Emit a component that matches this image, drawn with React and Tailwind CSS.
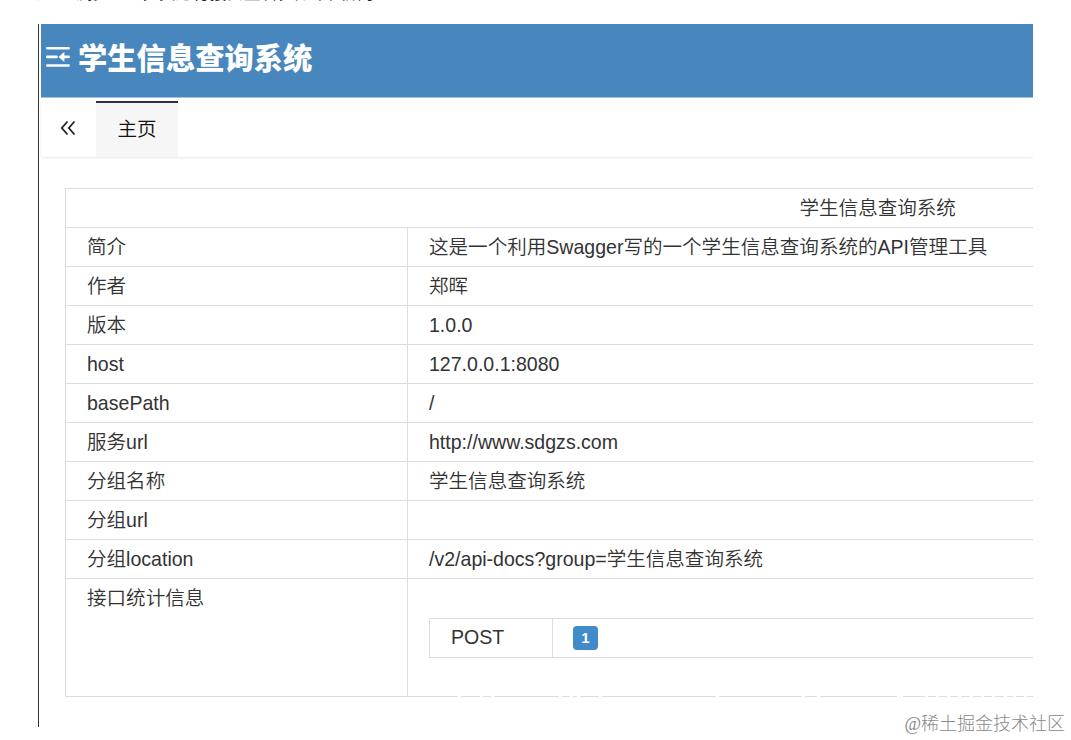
import React from "react";

const rows = [
  { label: "简介", value: "这是一个利用Swagger写的一个学生信息查询系统的API管理工具" },
  { label: "作者", value: "郑晖" },
  { label: "版本", value: "1.0.0" },
  { label: "host", value: "127.0.0.1:8080" },
  { label: "basePath", value: "/" },
  { label: "服务url", value: "http://www.sdgzs.com" },
  { label: "分组名称", value: "学生信息查询系统" },
  { label: "分组url", value: "" },
  { label: "分组location", value: "/v2/api-docs?group=学生信息查询系统" },
];

const MenuFoldIcon = () => (
  <svg
    width="24"
    height="22"
    viewBox="0 0 24 22"
    className="shrink-0"
    fill="none"
    stroke="#fff"
    strokeWidth="2.6"
    strokeLinecap="round"
  >
    <path d="M1.2 2.2H22.6M1.2 10.9H10.5M16 10.9H22.6M1.2 19.5H22.6" />
    <path d="M12.6 10.9L18.4 5.8V16Z" fill="#fff" stroke="none" />
  </svg>
);

const DoubleLeftIcon = () => (
  <svg
    width="16"
    height="16"
    viewBox="0 0 16 16"
    fill="none"
    stroke="#222"
    strokeWidth="1.8"
  >
    <path d="M7.5 1.5L1.8 8L7.5 14.5M14.5 1.5L8.8 8L14.5 14.5" />
  </svg>
);

// Breaks in the bottom rule of the table
const RuleGaps = () => (
  <svg
    width="968"
    height="3"
    viewBox="65 0 968 3"
    className="-bottom-[1px] left-0 absolute"
    stroke="#fff"
    strokeWidth="3"
  >
    <path d="M457 1.5h3M479 1.5h3M490 1.5h3M558 1.5h3M569 1.5h3M576 1.5h3M598 1.5h3M715 1.5h3M801 1.5h3M816 1.5h3M896 1.5h6M924 1.5h3M935 1.5h3M946 1.5h3M957 1.5h3M969 1.5h3M980 1.5h3M991 1.5h3M1003 1.5h3M1012 1.5h3M1023 1.5h3" />
  </svg>
);

const InfoRow = ({ label, value }) => (
  <div className="flex h-[39.06px] border-[#ddd] border-b leading-[38px]">
    <div className="pl-[21px] border-[#ddd] border-r w-[342px] shrink-0">
      {label}
    </div>
    <div className="pl-[21px] whitespace-nowrap">{value}</div>
  </div>
);

function App() {
  return (
    <div className="flex flex-col bg-white w-[1071px] h-[740px] overflow-hidden font-['Liberation_Sans','Noto_Sans_CJK_SC',sans-serif] font-[350] text-[#333] text-[19.56px]">
      {/* Tail of the paragraph above */}
      <div className="flex items-end pl-[37px] h-6 shrink-0">
        <p className="mb-[21px] font-normal text-[#222] text-[17px] leading-[19px] whitespace-nowrap">
          通过 浏览 doc，页进行接口查看，如下图所示
        </p>
      </div>

      <div className="flex flex-col ml-[38px] pl-[2px] border-[#333] border-l w-[995px] h-[703px] overflow-hidden shrink-0">
        {/* Header */}
        <header className="flex items-start gap-[8px] bg-[#4887bd] pt-[22px] pl-[5px] border-[#a3c3de] border-b h-[74px] shrink-0">
          <MenuFoldIcon />
          <h1 className="font-black text-[29.3px] text-white leading-[25px]">
            学生信息查询系统
          </h1>
        </header>

        {/* Tabs */}
        <nav className="flex shadow-[0_1px_2px_rgba(0,0,0,0.1)] pt-[3px] h-[58.5px] shrink-0">
          <div className="flex justify-center items-center pr-[2px] pb-[1px] w-[55px]">
            <DoubleLeftIcon />
          </div>
          <div className="flex justify-center bg-[#f6f6f6] border-[#2f323c] border-t-2 w-[82px] text-[#111] leading-[52px]">
            主页
          </div>
        </nav>

        {/* Project info */}
        <main className="relative mt-[31.35px] ml-[24px] border-[#ddd] border-t border-l w-[968px] shrink-0">
          <div className="pl-[733.5px] border-[#ddd] border-b h-[39.06px] leading-[38px] whitespace-nowrap">
            学生信息查询系统
          </div>
          {rows.map((row) => (
            <InfoRow key={row.label} label={row.label} value={row.value} />
          ))}
          <div className="flex border-[#ddd] border-b h-[118px]">
            <div className="pl-[21px] border-[#ddd] border-r w-[342px] leading-[38px] shrink-0">
              接口统计信息
            </div>
            <div className="flex-1 pt-[39px] pl-[21px]">
              <div className="flex border-[#ddd] border-t border-b border-l h-[40px] leading-[37px]">
                <div className="pl-[21px] border-[#ddd] border-r w-[123px]">
                  POST
                </div>
                <div className="flex items-center pb-[1px] pl-[20px]">
                  <span className="bg-[#428bca] rounded-[4px] w-[25px] h-[24px] font-bold text-[15px] text-white text-center leading-[24px]">
                    1
                  </span>
                </div>
              </div>
            </div>
          </div>
          <RuleGaps />
        </main>
      </div>

      <div className="-mt-[15px] pr-[6px] font-['Liberation_Serif','Noto_Sans_CJK_SC',serif] font-light text-[#888] text-[18px] text-right leading-[24px]">
        @稀土掘金技术社区
      </div>
    </div>
  );
}

export default App;
